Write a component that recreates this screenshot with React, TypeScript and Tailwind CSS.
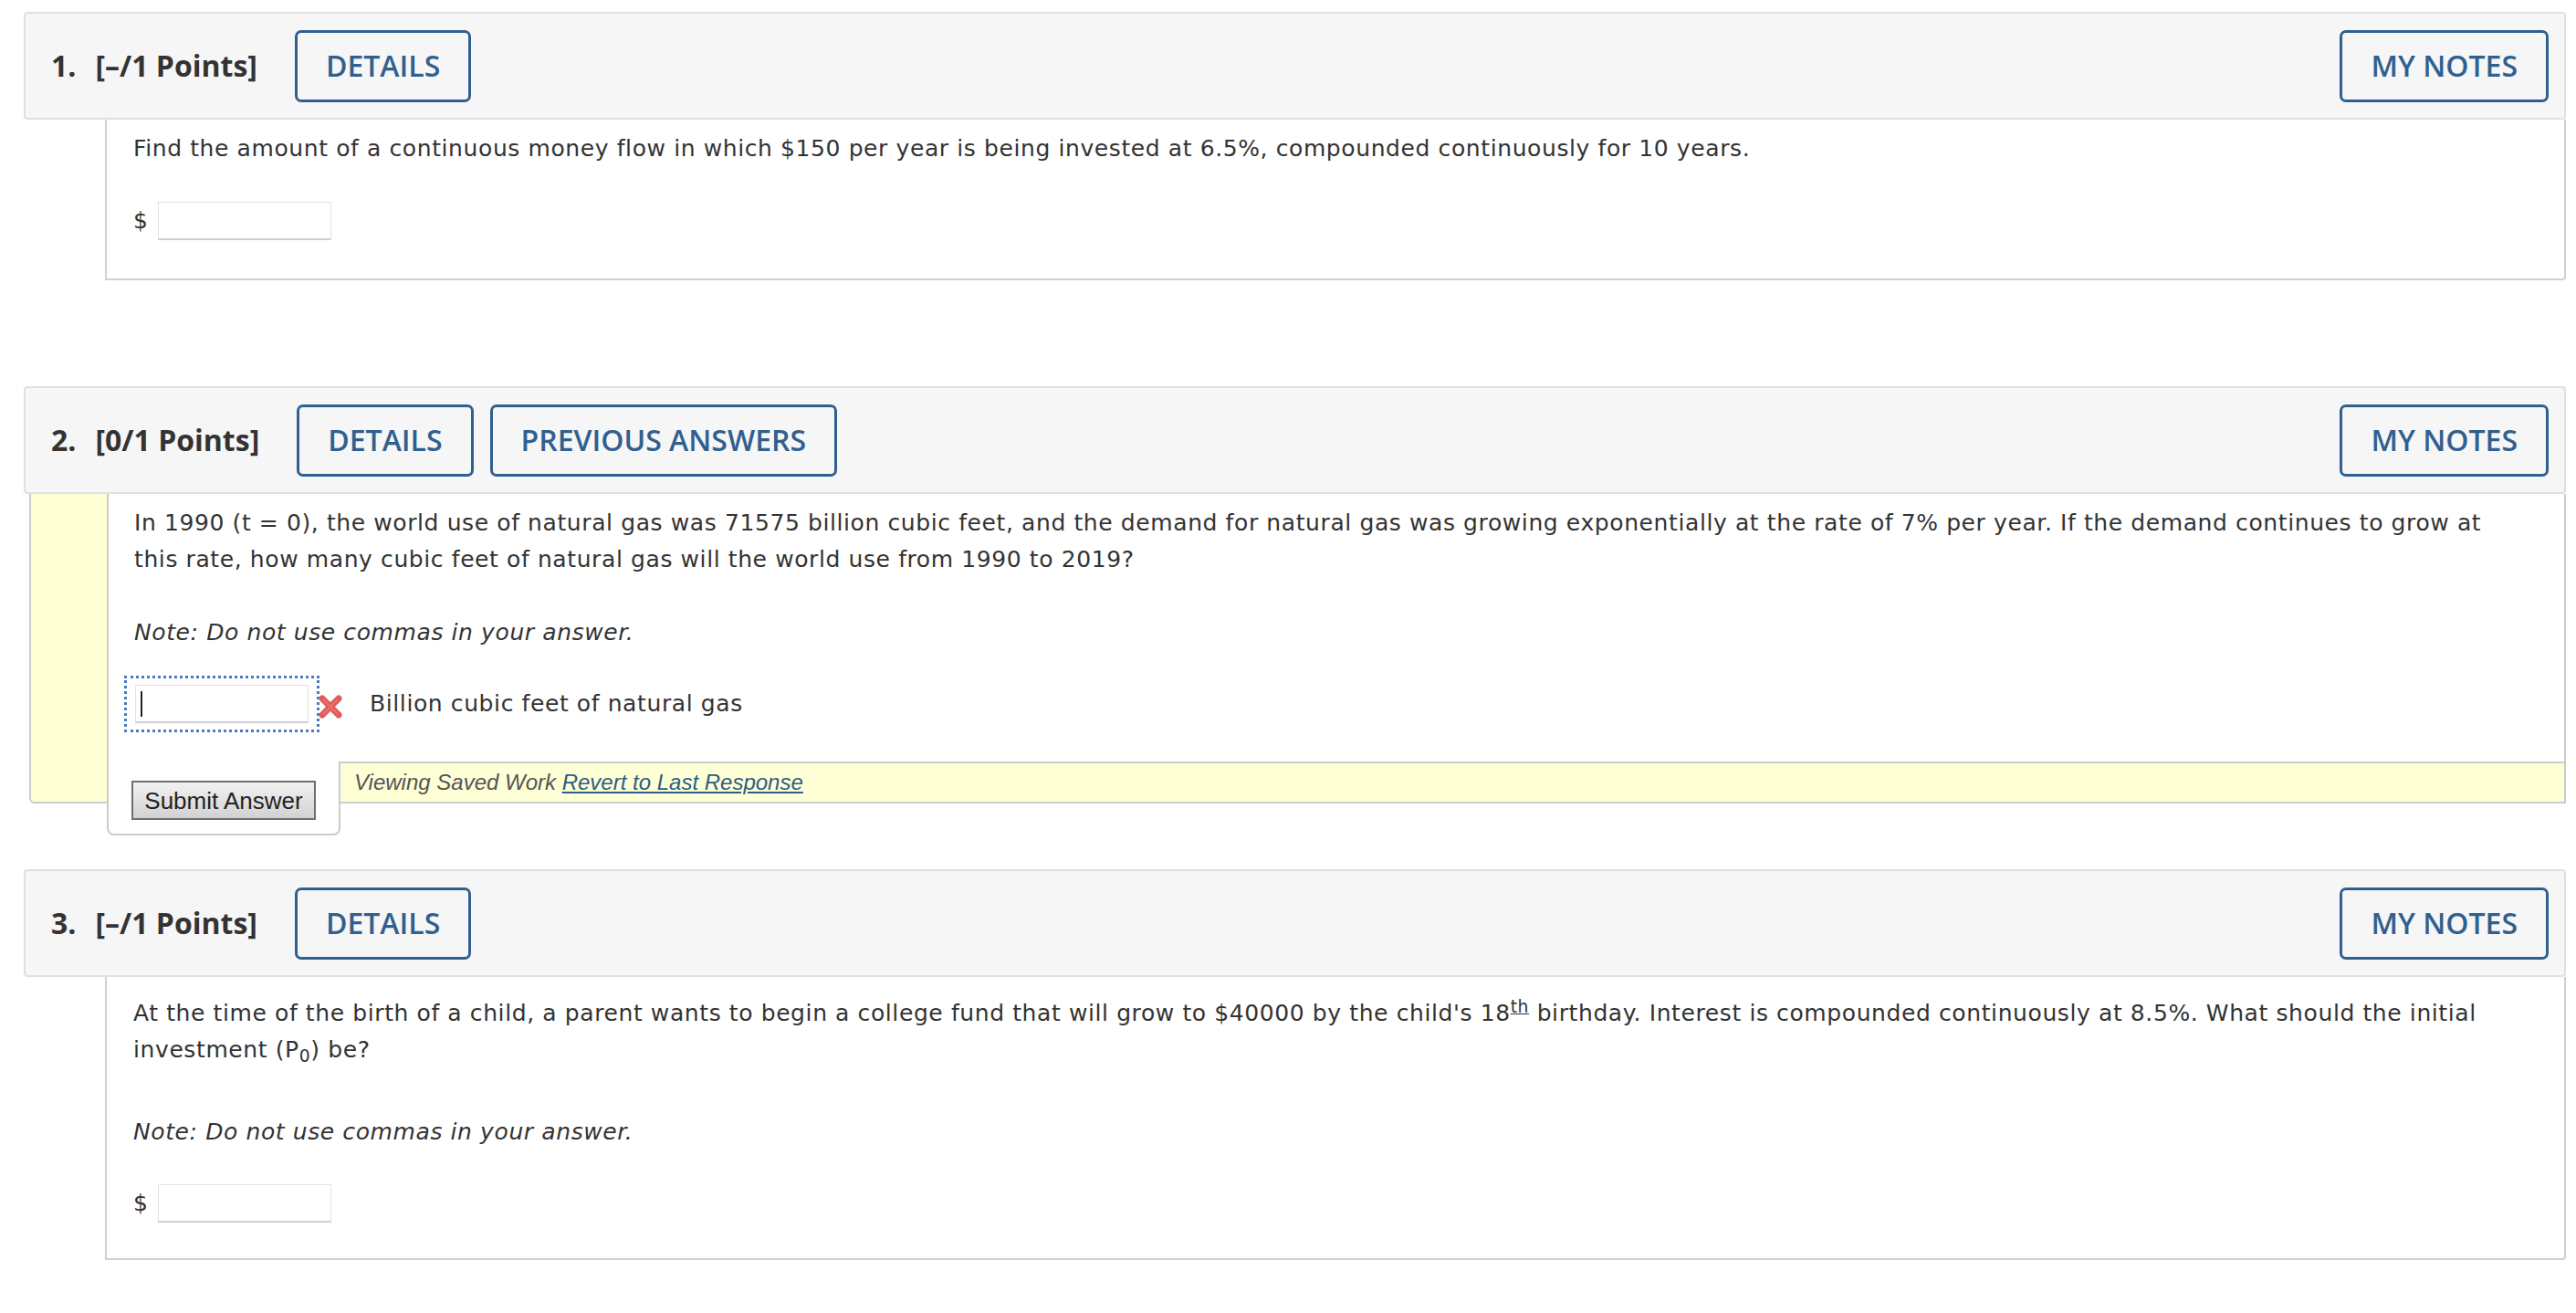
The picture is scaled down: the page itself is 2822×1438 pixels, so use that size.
import type { ReactNode } from "react";

const bodyFont = "font-['DejaVu_Sans',Verdana,sans-serif]";

function HeaderButton({ children }: { children: ReactNode }) {
  return (
    <div className="flex h-[79px] items-center rounded-[7px] border-[3px] border-[#30608f] px-[31px] text-[32px] font-semibold text-[#30608f]">
      {children}
    </div>
  );
}

function QuestionHeader({ num, points, extra }: { num: string; points: string; extra?: boolean }) {
  return (
    <div className="flex h-[118px] items-center justify-between rounded-[4px] border-2 border-[#e0e0e0] bg-[#f6f6f6] pl-[28px] pr-[17px] font-['Open_Sans',sans-serif] tracking-normal">
      <div className="flex items-center">
        <span className="text-[32px] font-bold text-[#333]">{num}</span>
        <span className="ml-[21px] text-[32px] font-bold text-[#333]">{points}</span>
        <div className="ml-[41px] flex gap-[18px]">
          <HeaderButton>DETAILS</HeaderButton>
          {extra && <HeaderButton>PREVIOUS ANSWERS</HeaderButton>}
        </div>
      </div>
      <HeaderButton>MY NOTES</HeaderButton>
    </div>
  );
}

function AnswerBox({ caret }: { caret?: boolean }) {
  return (
    <div className="flex h-[42px] w-[190px] items-center border border-[#e2e2e2] border-b-2 border-b-[#cfcfcf] bg-white pl-[5px]">
      {caret && <span className="h-[28px] w-[2px] bg-[#222]" />}
    </div>
  );
}

function RedX() {
  return (
    <svg viewBox="0 0 28 28" className="h-[28px] w-[28px]" aria-hidden="true">
      <path d="M5 5 L23 23 M23 5 L5 23" stroke="#e25a5a" strokeWidth="7" strokeLinecap="round" fill="none" />
      <path d="M6.5 6.5 L21.5 21.5 M21.5 6.5 L6.5 21.5" stroke="#f08a8a" strokeWidth="2" strokeLinecap="round" fill="none" opacity="0.5" />
    </svg>
  );
}

export default function App() {
  return (
    <div className={`min-h-screen bg-white pb-[40px] pl-[26px] pr-[11px] pt-[13px] text-[25px] leading-[40px] tracking-[0.6px] text-[#333] ${bodyFont}`}>
      {/* Question 1 */}
      <QuestionHeader num="1." points="[–/1 Points]" />
      <div className="ml-[89px] rounded-br-[4px] border-2 border-t-0 border-[#d0d0d0] pb-[42px] pl-[29px] pr-[30px] pt-[12px]">
        <p>
          Find the amount of a continuous money flow in which $150 per year is being invested at 6.5%, compounded continuously for 10 years.
        </p>
        <div className="mt-[38px] flex items-center gap-[10px]">
          <span>$</span>
          <AnswerBox />
        </div>
      </div>

      {/* Question 2 */}
      <div className="mt-[116px]">
        <QuestionHeader num="2." points="[0/1 Points]" extra />
        <div className="ml-[6px] flex rounded-bl-[6px] border-2 border-t-0 border-[#cccccc] bg-[#ffffd6]">
          <div className="w-[83px] shrink-0" />
          <div className="flex flex-1 flex-col">
            <div className="border-l-2 border-[#cccccc] bg-white pb-[32px] pl-[28px] pr-[30px] pt-[12px]">
              <p>
                In 1990 (t = 0), the world use of natural gas was 71575 billion cubic feet, and the demand for natural gas was growing exponentially at the rate of 7% per year. If the demand continues to grow at
                <br />
                this rate, how many cubic feet of natural gas will the world use from 1990 to 2019?
              </p>
              <p className="mt-[40px] italic">Note: Do not use commas in your answer.</p>
              <div className="ml-[-11px] mt-[27px] flex items-center">
                <div className="border-[3px] border-dotted border-[#4a7bbd] px-[9px] py-[7px]">
                  <AnswerBox caret />
                </div>
                <div className="ml-[-2px] mt-[6px]">
                  <RedX />
                </div>
                <span className="ml-[29px]">Billion cubic feet of natural gas</span>
              </div>
            </div>
            <div className="flex h-[44px] font-['Liberation_Sans',Arial,sans-serif] tracking-normal">
              <div className="relative z-10 mb-[-37px] flex h-[81px] w-[256px] shrink-0 items-start rounded-b-[8px] border-2 border-t-0 border-[#cccccc] bg-white pl-[25px] pt-[21px]">
                <button className="h-[43px] w-[202px] border-2 border-[#6f6f6f] bg-gradient-to-b from-[#f2f2f2] to-[#d2d2d2] text-[26px] leading-none text-[#222]">
                  Submit Answer
                </button>
              </div>
              <div className="flex flex-1 items-center border-t-2 border-[#cccccc] pl-[15px] text-[24px] italic text-[#555]">
                <span>
                  Viewing Saved Work{" "}
                  <a className="text-[#2b5d86] underline" href="#">
                    Revert to Last Response
                  </a>
                </span>
              </div>
            </div>
          </div>
        </div>
      </div>

      {/* Question 3 */}
      <div className="mt-[72px]">
        <QuestionHeader num="3." points="[–/1 Points]" />
        <div className="ml-[89px] rounded-br-[4px] border-2 border-t-0 border-[#d0d0d0] pb-[39px] pl-[29px] pr-[30px] pt-[20px]">
          <p>
            At the time of the birth of a child, a parent wants to begin a college fund that will grow to $40000 by the child's 18
            <sup className="underline">th</sup> birthday. Interest is compounded continuously at 8.5%. What should the initial
            <br />
            investment (P<sub>0</sub>) be?
          </p>
          <p className="mt-[50px] italic">Note: Do not use commas in your answer.</p>
          <div className="mt-[37px] flex items-center gap-[10px]">
            <span>$</span>
            <AnswerBox />
          </div>
        </div>
      </div>
    </div>
  );
}
